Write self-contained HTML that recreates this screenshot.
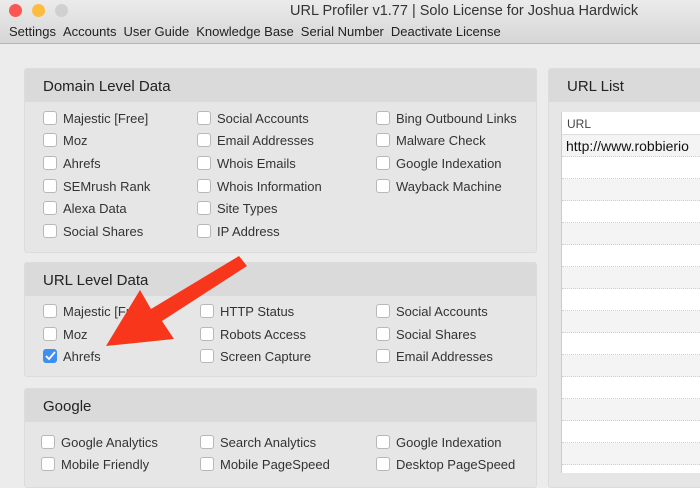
<!DOCTYPE html>
<html><head><meta charset="utf-8"><style>
*{margin:0;padding:0;box-sizing:border-box}
body{width:700px;height:473px;overflow:hidden;background:#ececec;font-family:"Liberation Sans",sans-serif;color:#222;position:relative}
.top{position:absolute;left:0;top:0;width:700px;height:44px;background:linear-gradient(#ebebeb,#d6d6d6);border-bottom:1px solid #b5b5b5}
.dot{position:absolute;top:4px;width:13px;height:13px;border-radius:50%}
.title{position:absolute;left:290px;top:3px;font-size:14.5px;color:#333;white-space:nowrap}
.menu{position:absolute;left:9px;top:24px;font-size:13px;color:#222;white-space:nowrap}
.menu span{margin-right:7px}
.panel{position:absolute;background:#e6e6e6;border:1px solid #dcdcdc;border-radius:3px}
.ph{height:33px;background:#dadada;font-size:15px;padding:9px 0 0 18px;color:#222}
.cb{position:absolute;font-size:13px;color:#333;line-height:15px;white-space:nowrap}
.cb i{position:absolute;left:-20px;top:0;width:14px;height:14px;background:#fff;border:1px solid #b8b8b8;border-radius:3px}
.cb i.on{background:#3d8ef0;border-color:#3d8ef0}
.tbl{position:absolute;left:561px;top:112px;width:139px;height:361px;background:#fff;border-left:1px solid #ccc}
.row{height:22px;border-bottom:1px dotted #d0d0d0}
</style></head><body>
<div class="top">
<div class="dot" style="left:9px;background:#fc5753"></div>
<div class="dot" style="left:32px;background:#fdbc40"></div>
<div class="dot" style="left:55px;background:#d0d0d0"></div>
<div class="title">URL Profiler v1.77 | Solo License for Joshua Hardwick</div>
<div class="menu"><span>Settings</span><span>Accounts</span><span>User Guide</span><span>Knowledge Base</span><span>Serial Number</span><span>Deactivate License</span></div>
</div>

<div class="panel" style="left:24px;top:68px;width:513px;height:185px"><div class="ph">Domain Level Data</div></div>
<div class="panel" style="left:24px;top:262px;width:513px;height:115px"><div class="ph">URL Level Data</div></div>
<div class="panel" style="left:24px;top:388px;width:513px;height:100px"><div class="ph">Google</div></div>
<div class="panel" style="left:548px;top:68px;width:170px;height:420px"><div class="ph">URL List</div></div>

<div class="tbl">
<div class="row" style="height:23px;font-size:12px;color:#444;padding:5px 0 0 5px;border-bottom:1px solid #ddd">URL</div>
<div class="row" style="background:#f4f4f4;font-size:14px;padding:3px 0 0 4px;color:#111;white-space:nowrap">http://www.robbierio</div>
<div class="row"></div><div class="row" style="background:#f4f4f4"></div><div class="row"></div><div class="row" style="background:#f4f4f4"></div><div class="row"></div><div class="row" style="background:#f4f4f4"></div><div class="row"></div><div class="row" style="background:#f4f4f4"></div><div class="row"></div><div class="row" style="background:#f4f4f4"></div><div class="row"></div><div class="row" style="background:#f4f4f4"></div><div class="row"></div><div class="row" style="background:#f4f4f4"></div>
</div>

<div class="cb" style="left:63px;top:111px"><i></i>Majestic [Free]</div>
<div class="cb" style="left:63px;top:133px"><i></i>Moz</div>
<div class="cb" style="left:63px;top:156px"><i></i>Ahrefs</div>
<div class="cb" style="left:63px;top:179px"><i></i>SEMrush Rank</div>
<div class="cb" style="left:63px;top:201px"><i></i>Alexa Data</div>
<div class="cb" style="left:63px;top:224px"><i></i>Social Shares</div>
<div class="cb" style="left:217px;top:111px"><i></i>Social Accounts</div>
<div class="cb" style="left:217px;top:133px"><i></i>Email Addresses</div>
<div class="cb" style="left:217px;top:156px"><i></i>Whois Emails</div>
<div class="cb" style="left:217px;top:179px"><i></i>Whois Information</div>
<div class="cb" style="left:217px;top:201px"><i></i>Site Types</div>
<div class="cb" style="left:217px;top:224px"><i></i>IP Address</div>
<div class="cb" style="left:396px;top:111px"><i></i>Bing Outbound Links</div>
<div class="cb" style="left:396px;top:133px"><i></i>Malware Check</div>
<div class="cb" style="left:396px;top:156px"><i></i>Google Indexation</div>
<div class="cb" style="left:396px;top:179px"><i></i>Wayback Machine</div>

<div class="cb" style="left:63px;top:304px"><i></i>Majestic [Free]</div>
<div class="cb" style="left:63px;top:327px"><i></i>Moz</div>
<div class="cb" style="left:63px;top:349px"><i class="on"></i>Ahrefs</div>
<div class="cb" style="left:220px;top:304px"><i></i>HTTP Status</div>
<div class="cb" style="left:220px;top:327px"><i></i>Robots Access</div>
<div class="cb" style="left:220px;top:349px"><i></i>Screen Capture</div>
<div class="cb" style="left:396px;top:304px"><i></i>Social Accounts</div>
<div class="cb" style="left:396px;top:327px"><i></i>Social Shares</div>
<div class="cb" style="left:396px;top:349px"><i></i>Email Addresses</div>

<div class="cb" style="left:61px;top:435px"><i></i>Google Analytics</div>
<div class="cb" style="left:61px;top:457px"><i></i>Mobile Friendly</div>
<div class="cb" style="left:220px;top:435px"><i></i>Search Analytics</div>
<div class="cb" style="left:220px;top:457px"><i></i>Mobile PageSpeed</div>
<div class="cb" style="left:396px;top:435px"><i></i>Google Indexation</div>
<div class="cb" style="left:396px;top:457px"><i></i>Desktop PageSpeed</div>

<svg style="position:absolute;left:0;top:0" width="700" height="473">
<path d="M46 356 l3 3 l6 -7" stroke="#fff" stroke-width="1.8" fill="none"/>
<polygon points="239,256 247,266 162,321 174,339 106,346 140,290 151,309" fill="#f8361c"/>
</svg>
</body></html>
